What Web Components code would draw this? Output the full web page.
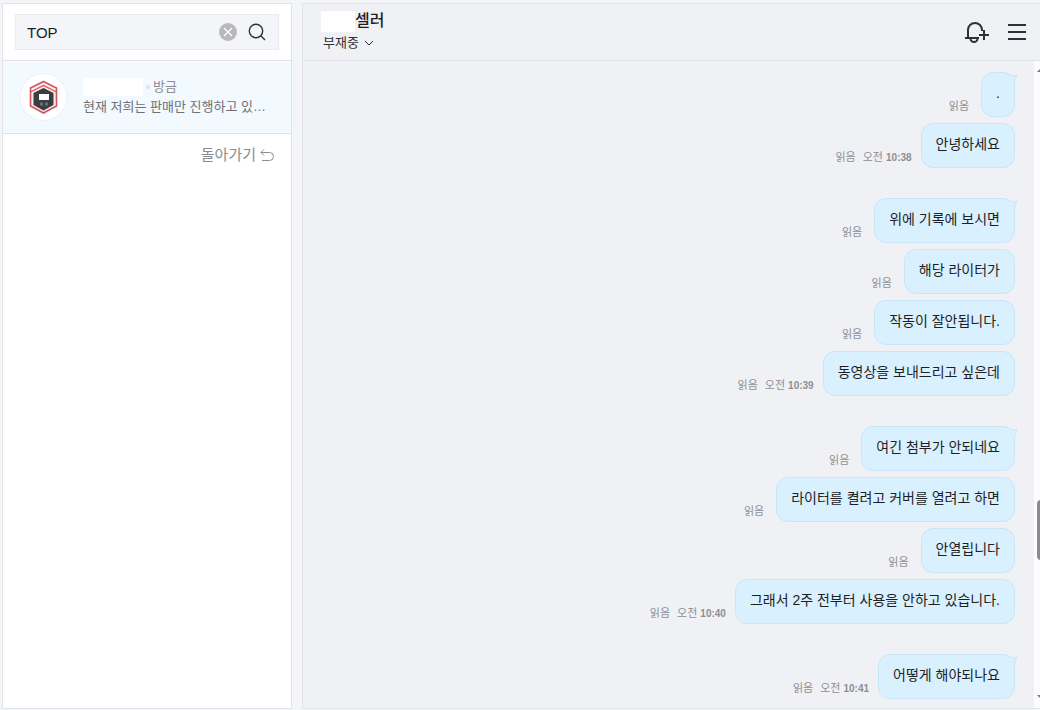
<!DOCTYPE html>
<html lang="ko">
<head>
<meta charset="utf-8">
<meta name="viewport" content="width=device-width, initial-scale=1">
<title>톡톡</title>
<style>
  html, body {
    height: 100%;
  }
  body {
    margin: 0;
    background: #f4f5f8;
    color: #1e1e23;
    font-family: "Liberation Sans", "Noto Sans CJK KR", sans-serif;
    font-size: 14px;
  }
</style>
</head>
<body>
<talk-app>
  <talk-sidebar slot="sidebar">
    <search-bar slot="search" value="TOP"></search-bar>
    <talk-item time="방금">현재 저희는 판매만 진행하고 있습니다</talk-item>
  </talk-sidebar>
  <chat-room name="셀러" status="부재중">
    <message-group>
      <chat-message tail>.</chat-message>
      <chat-message time="10:38">안녕하세요</chat-message>
    </message-group>
    <message-group>
      <chat-message tail>위에 기록에 보시면</chat-message>
      <chat-message>해당 라이터가</chat-message>
      <chat-message>작동이 잘안됩니다.</chat-message>
      <chat-message time="10:39">동영상을 보내드리고 싶은데</chat-message>
    </message-group>
    <message-group>
      <chat-message tail>여긴 첨부가 안되네요</chat-message>
      <chat-message>라이터를 켤려고 커버를 열려고 하면</chat-message>
      <chat-message>안열립니다</chat-message>
      <chat-message time="10:40">그래서 2주 전부터 사용을 안하고 있습니다.</chat-message>
    </message-group>
    <message-group>
      <chat-message tail time="10:41">어떻게 해야되나요</chat-message>
    </message-group>
  </chat-room>
</talk-app>

<script>
  class TalkApp extends HTMLElement {
    constructor() {
      super();
      this.attachShadow({ mode: 'open' });
      this.shadowRoot.innerHTML = `
        <style>
          :host {
            box-sizing: border-box;
            display: grid;
            grid-template-columns: 290px minmax(0, 1fr);
            gap: 10px;
            height: 100vh;
            padding: 3px 0 1px 2px;
            overflow: hidden;
          }
          @media (max-width: 640px) {
            :host {
              grid-template-columns: minmax(0, 1fr);
              height: auto;
            }
          }
        </style>
        <slot name="sidebar"></slot>
        <slot></slot>
      `;
    }
  }
  customElements.define('talk-app', TalkApp);

  class TalkSidebar extends HTMLElement {
    constructor() {
      super();
      this.attachShadow({ mode: 'open' });
      this.shadowRoot.innerHTML = `
        <style>
          :host {
            box-sizing: border-box;
            display: flex;
            flex-direction: column;
            border: 1px solid #e2e3e7;
            background: #fff;
          }
          .back {
            display: flex;
            align-items: center;
            align-self: flex-end;
            gap: 4px;
            margin: 10px 17px;
            padding: 0;
            border: 0;
            background: none;
            color: #8c8c8f;
            font: inherit;
            font-size: 15px;
            line-height: 22px;
            cursor: pointer;
          }
        </style>
        <slot name="search"></slot>
        <slot></slot>
        <button class="back" type="button">돌아가기
          <svg width="14" height="14" viewBox="0 0 14 14" fill="none" stroke="currentColor" aria-hidden="true">
            <path d="M4 1.5 1 4.5l3 3M1 4.5h8.5a4 4 0 0 1 0 8H2"/>
          </svg>
        </button>
      `;
    }
  }
  customElements.define('talk-sidebar', TalkSidebar);

  class SearchBar extends HTMLElement {
    constructor() {
      super();
      this.attachShadow({ mode: 'open' });
      this.shadowRoot.innerHTML = `
        <style>
          :host {
            display: block;
            padding: 10px 12px;
            border-bottom: 1px solid #e2e3e7;
          }
          form {
            box-sizing: border-box;
            display: flex;
            align-items: center;
            gap: 11px;
            height: 36px;
            padding: 0 12px 0 11px;
            border: 1px solid #ebecef;
            background: #f4f5f8;
          }
          input {
            flex: 1;
            min-width: 0;
            padding: 0;
            border: 0;
            outline: 0;
            background: none;
            color: #1e1e23;
            font: inherit;
            font-size: 15px;
          }
          button {
            display: flex;
            padding: 0;
            border: 0;
            background: none;
            cursor: pointer;
          }
        </style>
        <form>
          <input type="text" aria-label="대화 검색">
          <button class="clear" type="button" aria-label="지우기">
            <svg width="18" height="18" viewBox="0 0 18 18">
              <circle cx="9" cy="9" r="9" fill="#b9b9ba"/>
              <path d="m5 5 8 8m0-8-8 8" stroke="#fff" stroke-width="1.2"/>
            </svg>
          </button>
          <button type="submit" aria-label="검색">
            <svg width="18" height="18" viewBox="0 0 18 18" fill="none" stroke="#303038" stroke-width="1.4">
              <circle cx="8" cy="8" r="6.7"/>
              <path d="m12.5 12.5 4.5 4.5"/>
            </svg>
          </button>
        </form>
      `;
    }

    connectedCallback() {
      const input = this.shadowRoot.querySelector('input');
      input.value = this.getAttribute('value') || '';
      this.shadowRoot.querySelector('.clear').addEventListener('click', () => {
        input.value = '';
        input.focus();
      });
      this.shadowRoot.querySelector('form').addEventListener('submit', (e) => e.preventDefault());
    }
  }
  customElements.define('search-bar', SearchBar);

  class TalkItem extends HTMLElement {
    connectedCallback() {
      this.attachShadow({ mode: 'open' });
      this.shadowRoot.innerHTML = `
        <style>
          :host {
            display: block;
            border-bottom: 1px solid #e2e3e7;
            background: #f2f9ff;
          }
          a {
            display: flex;
            align-items: center;
            gap: 15px;
            padding: 12px 20px 12px 16px;
            color: #707075;
            text-decoration: none;
          }
          .avatar {
            flex: none;
          }
          .info {
            flex: 1;
            min-width: 0;
          }
          .top {
            display: flex;
            align-items: center;
            gap: 3px;
            color: #8c8c90;
            font-size: 13px;
            line-height: 20px;
          }
          .name {
            width: 60px;
            height: 18px;
            background: #fff;
          }
          .dot {
            width: 4px;
            height: 4px;
            border-radius: 50%;
            background: #dfe3e8;
          }
          p {
            margin: 0;
            overflow: hidden;
            font-size: 13px;
            line-height: 20px;
            white-space: nowrap;
            text-overflow: ellipsis;
          }
        </style>
        <a href="#">
          <svg class="avatar" width="49" height="48" viewBox="0 0 49 48" aria-hidden="true">
            <circle cx="24.5" cy="24" r="23.5" fill="#fff" stroke="#eef0f2"/>
            <path d="M24.5 8.5 37.5 15v18l-13 7-13-7V15z" fill="#fbe9ea" stroke="#cf5660" stroke-width="1.6"/>
            <path d="M11.5 19 24.5 12.5 37.5 19" fill="none" stroke="#cf5660" stroke-width="1.3"/>
            <path d="M24.5 15 34.5 20v12l-10 5.5-10-5.5V20z" fill="#3b3d40"/>
            <path d="M20 21h10v6H20z" fill="#fff"/>
            <path d="M21 29.5h3v3h-3zm5 0h3v3h-3z" fill="#6f7073"/>
          </svg>
          <span class="info">
            <span class="top"><span class="name"></span><span class="dot"></span><span>${this.getAttribute('time')}</span></span>
            <p><slot></slot></p>
          </span>
        </a>
      `;
    }
  }
  customElements.define('talk-item', TalkItem);

  class ChatRoom extends HTMLElement {
    connectedCallback() {
      this.attachShadow({ mode: 'open' });
      this.shadowRoot.innerHTML = `
        <style>
          :host {
            box-sizing: border-box;
            display: flex;
            flex-direction: column;
            min-width: 0;
            border: 1px solid #e2e3e7;
            border-right: 0;
            background: #f0f1f5;
          }
          header {
            box-sizing: border-box;
            display: flex;
            align-items: center;
            justify-content: space-between;
            height: 57px;
            padding: 0 14px 0 18px;
            border-bottom: 1px solid #e2e3e7;
          }
          h1 {
            display: flex;
            align-items: center;
            margin: 0;
            font-size: 16px;
            font-weight: 500;
            line-height: 22px;
          }
          .mask {
            width: 34px;
            height: 21px;
            background: #fff;
          }
          button {
            display: flex;
            align-items: center;
            padding: 0;
            border: 0;
            background: none;
            color: #303038;
            font: inherit;
            cursor: pointer;
          }
          .status {
            gap: 5px;
            padding-left: 2px;
            font-size: 13px;
            line-height: 22px;
          }
          .tools {
            display: flex;
            align-items: center;
            gap: 18px;
          }
          .body {
            display: flex;
            flex: 1;
            min-height: 0;
          }
          .list {
            display: flex;
            flex: 1;
            flex-direction: column;
            gap: 30px;
            min-width: 0;
            padding: 11px 19px 9px;
            overflow: hidden;
          }
          .scroll {
            display: grid;
            grid-template-rows: 14px 425fr 60px 134fr 14px;
            width: 6px;
            overflow: hidden;
            background: #fcfcfc;
          }
          .scroll svg {
            display: block;
            margin-left: 2px;
          }
          .thumb {
            grid-row: 3;
            width: 8px;
            margin-left: 3px;
            border-radius: 4px;
            background: #8b8b8b;
          }
          .down {
            grid-row: 5;
          }
        </style>
        <header>
          <div>
            <h1><span class="mask"></span>${this.getAttribute('name')}</h1>
            <button class="status" type="button">${this.getAttribute('status')}
              <svg width="10" height="6" viewBox="0 0 10 6" fill="none" stroke="currentColor" aria-hidden="true">
                <path d="m1 1 4 4 4-4"/>
              </svg>
            </button>
          </div>
          <div class="tools">
            <button type="button" aria-label="알림 추가">
              <svg width="26" height="24" viewBox="0 0 26 24" fill="none" stroke="currentColor" stroke-width="2">
                <path d="M1 18h14M4 18V10a7 7 0 0 1 14 0v1M6.500 18.500a3.500 3.500 0 0 0 7 0M20 10v10M15 15h10"/>
              </svg>
            </button>
            <button type="button" aria-label="메뉴">
              <svg width="18" height="18" viewBox="0 0 18 18" stroke="currentColor" stroke-width="2">
                <path d="M0 2h18M0 9h18M0 16h18"/>
              </svg>
            </button>
          </div>
        </header>
        <div class="body">
          <div class="list"><slot></slot></div>
          <div class="scroll" aria-hidden="true">
            <svg width="8" height="14" viewBox="0 0 8 14"><path d="m1 11 4-4 4 4z" fill="#777"/></svg>
            <span class="thumb"></span>
            <svg class="down" width="8" height="14" viewBox="0 0 8 14"><path d="m1 1 4 4 4-4z" fill="#777"/></svg>
          </div>
        </div>
      `;
    }
  }
  customElements.define('chat-room', ChatRoom);

  class MessageGroup extends HTMLElement {
    constructor() {
      super();
      this.attachShadow({ mode: 'open' });
      this.shadowRoot.innerHTML = `
        <style>
          :host {
            display: flex;
            flex-direction: column;
            gap: 6px;
          }
        </style>
        <slot></slot>
      `;
    }
  }
  customElements.define('message-group', MessageGroup);

  class ChatMessage extends HTMLElement {
    connectedCallback() {
      const time = this.getAttribute('time');
      this.attachShadow({ mode: 'open' });
      this.shadowRoot.innerHTML = `
        <style>
          :host {
            display: flex;
            align-items: flex-end;
            justify-content: flex-end;
          }
          .meta {
            display: flex;
            flex: none;
            gap: 7px;
            margin-right: 12px;
            padding-bottom: 3px;
            color: #8e8e93;
            font-size: 11px;
            line-height: 16px;
          }
          .meta.timed {
            margin-right: 9px;
          }
          time b {
            font-size: 10px;
            line-height: 0;
          }
          .bubble {
            position: relative;
            box-sizing: border-box;
            min-height: 45px;
            padding: 9px 14px 12px;
            border: 1px solid #c8e6f8;
            border-radius: 12px;
            background: #d9f0ff;
            color: #1e1e23;
            font-size: 14px;
            line-height: 22px;
          }
          /* the tail sits over the top right corner */
          .tail {
            position: absolute;
            top: 0;
            right: -4px;
          }
        </style>
        <span class="meta ${time ? 'timed' : ''}">
          <span>읽음</span>
          ${time ? `<time>오전 <b>${time}</b></time>` : ''}
        </span>
        <div class="bubble">
          <slot></slot>
          ${this.hasAttribute('tail') ? `
          <svg class="tail" width="12" height="12" viewBox="0 0 12 12" aria-hidden="true">
            <path d="M2 2.5 5 2.5C7 3.5 10 3 11.5 2 10 4 9 6.5 8.5 10L6 11 2 8z" fill="#d9f0ff"/>
            <path d="M4.5 1.8C6 3.5 9 3 11.5 2 10 4 9 6.5 8.5 10" fill="none" stroke="#c8e6f8"/>
          </svg>` : ''}
        </div>
      `;
    }
  }
  customElements.define('chat-message', ChatMessage);
</script>
</body>
</html>
